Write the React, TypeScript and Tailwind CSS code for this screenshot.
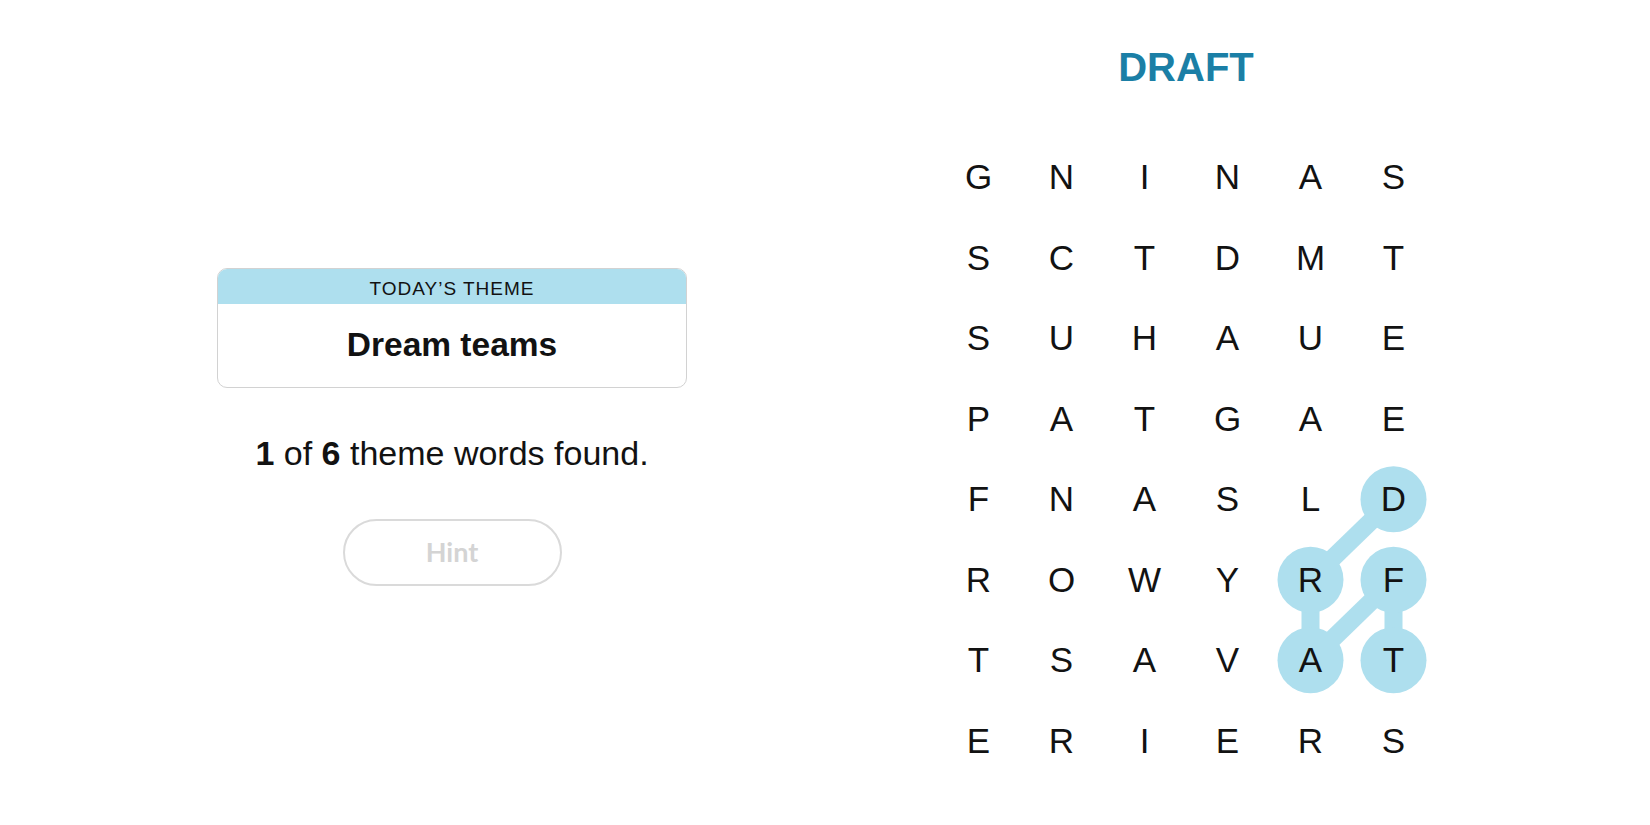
const GRID = [
  "GNINAS",
  "SCTDMT",
  "SUHAUE",
  "PATGAE",
  "FNASLD",
  "ROWYRF",
  "TSAVAT",
  "ERIERS",
];

const CELL_W = 83;
const CELL_H = 80.5;

// selected path: D -> R -> A -> F -> T  as [row, col]
const PATH: [number, number][] = [
  [4, 5],
  [5, 4],
  [6, 4],
  [5, 5],
  [6, 5],
];

const cx = (c: number) => CELL_W / 2 + CELL_W * c;
const cy = (r: number) => CELL_H / 2 + CELL_H * r;

function Board() {
  return (
    <div className="relative grid w-[498px] grid-cols-6">
      <svg
        className="absolute left-0 top-0"
        width={498}
        height={644}
        viewBox="0 0 498 644"
      >
        {PATH.slice(1).map(([r, c], i) => {
          const [pr, pc] = PATH[i];
          return (
            <line
              key={i}
              x1={cx(pc)}
              y1={cy(pr)}
              x2={cx(c)}
              y2={cy(r)}
              stroke="#aedfee"
              strokeWidth={18}
            />
          );
        })}
        {PATH.map(([r, c]) => (
          <circle key={`${r}-${c}`} cx={cx(c)} cy={cy(r)} r={33} fill="#aedfee" />
        ))}
      </svg>
      {GRID.map((row, r) =>
        row.split("").map((ch, c) => (
          <div
            key={`${r}-${c}`}
            className="relative flex h-[80.5px] w-[83px] items-center justify-center text-[35px] leading-none text-[#121212]"
          >
            {ch}
          </div>
        ))
      )}
    </div>
  );
}

export default function App() {
  return (
    <div className="flex h-[825px] w-[1650px] items-start bg-white font-['Liberation_Sans',Arial,sans-serif] text-[#121212]">
      <div className="ml-[217px] mt-[268px] flex w-[470px] flex-col items-center">
        <div className="w-full overflow-hidden rounded-[10px] border border-[#d2d2d2]">
          <div className="flex h-[35px] items-center justify-center bg-[#aedfee] pt-[4px] text-[19px] leading-none tracking-[1px]">
            TODAY’S THEME
          </div>
          <div className="flex h-[83px] items-center justify-center text-[33.5px] font-bold">
            Dream teams
          </div>
        </div>

        <p className="mt-[45px] text-[34px] leading-[40px]">
          <strong>1</strong> of <strong>6</strong> theme words found.
        </p>

        <button className="mt-[46px] flex h-[67px] w-[219px] items-center justify-center rounded-full border-2 border-[#dadada] font-['Lato',sans-serif] text-[27px] font-bold text-[#d4d4d4]">
          Hint
        </button>
      </div>

      <div className="ml-[250px] flex w-[498px] flex-col items-center pt-[43px]">
        <h1 className="h-[48px] text-[40px] font-bold leading-[48px] text-[#1b7fa6]">
          DRAFT
        </h1>
        <div className="mt-[45.5px]">
          <Board />
        </div>
      </div>
    </div>
  );
}
